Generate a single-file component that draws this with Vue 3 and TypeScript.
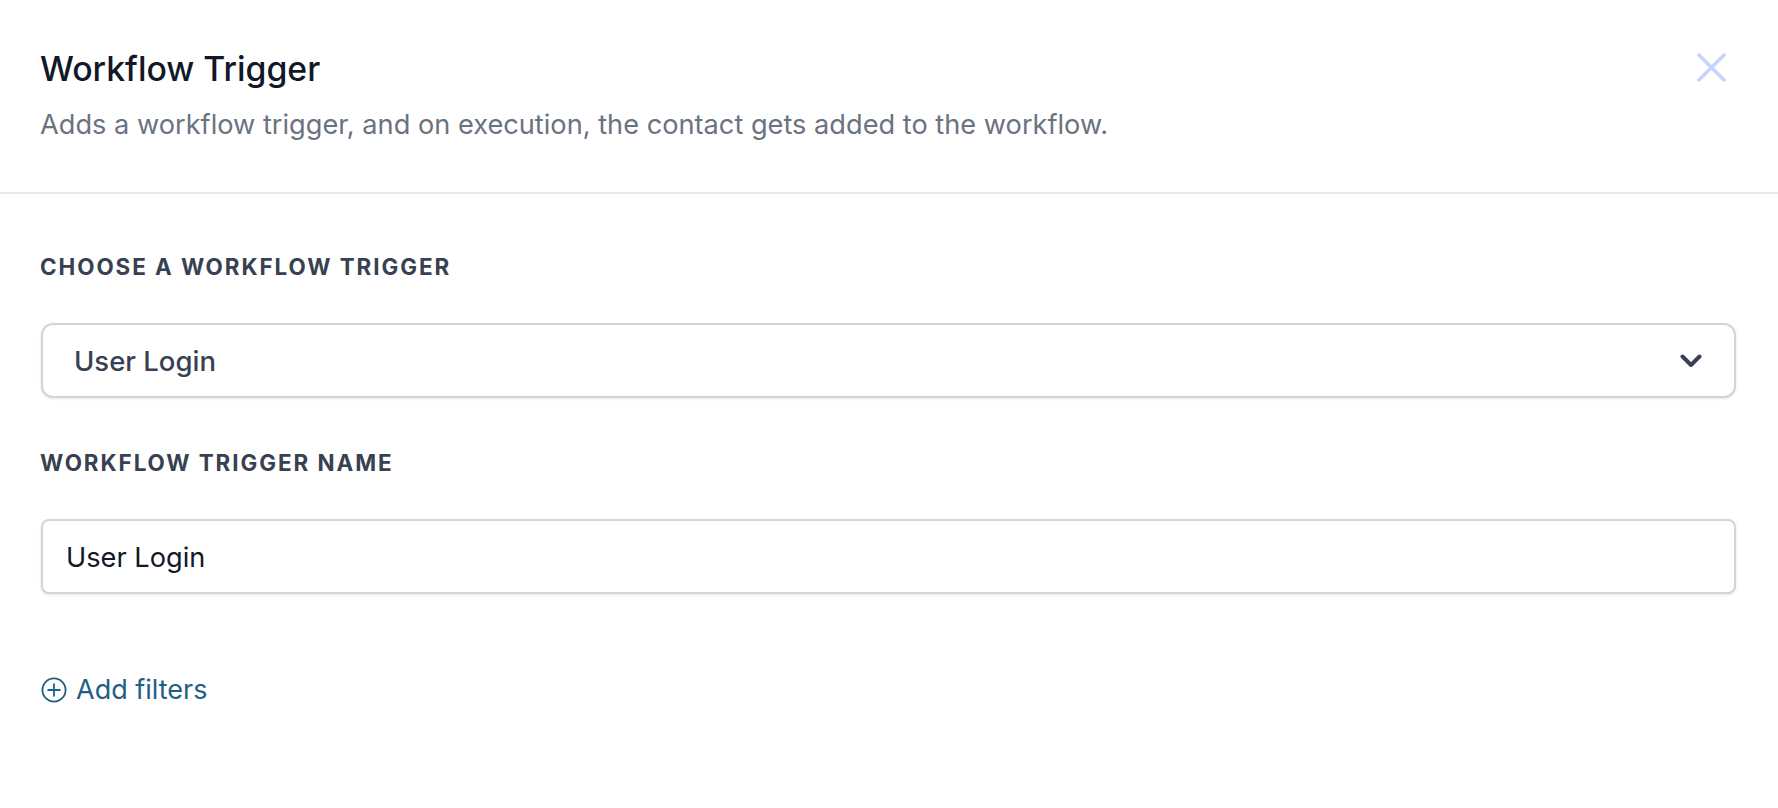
<script setup lang="ts">
const title = 'Workflow Trigger'
const description = 'Adds a workflow trigger, and on execution, the contact gets added to the workflow.'
const triggerName = 'User Login'
</script>

<template>
  <div class="panel">
    <header class="head">
      <div class="head-text">
        <h1 class="title">{{ title }}</h1>
        <p class="desc">{{ description }}</p>
      </div>
      <svg class="close" viewBox="0 0 30 30" fill="none" aria-hidden="true">
        <path d="M2 2L28 28M28 2L2 28" stroke="#c7d2fe" stroke-width="3.6" stroke-linecap="round" />
      </svg>
    </header>
    <main class="body">
      <div class="label">CHOOSE A WORKFLOW TRIGGER</div>
      <div class="select">
        <span>{{ triggerName }}</span>
        <svg class="chev" viewBox="0 0 22 14" fill="none" aria-hidden="true">
          <path d="M2.5 2.5L11 11L19.5 2.5" stroke="#374151" stroke-width="4" stroke-linecap="round" stroke-linejoin="round" />
        </svg>
      </div>
      <div class="label second">WORKFLOW TRIGGER NAME</div>
      <div class="input">{{ triggerName }}</div>
      <div class="add">
        <svg class="plus" viewBox="0 0 26 26" fill="none" aria-hidden="true">
          <circle cx="13" cy="13" r="11.6" stroke="#1f5f85" stroke-width="1.8" />
          <path d="M13 6.5V19.5M6.5 13H19.5" stroke="#1f5f85" stroke-width="1.8" />
        </svg>
        <span>Add filters</span>
      </div>
    </main>
  </div>
</template>

<style>
html, body { background: #fff; }
</style>

<style scoped>
.panel {
  width: 1778px;
  height: 808px;
  background: #fff;
  font-family: Inter, "Liberation Sans", sans-serif;
  overflow: hidden;
}
.head {
  display: flex;
  justify-content: space-between;
  align-items: flex-start;
  height: 194px;
  box-sizing: border-box;
  padding: 49px 41px 0 40px;
  border-bottom: 2px solid #e5e7eb;
}
.title {
  margin: 0;
  font-size: 33.8px;
  line-height: 40px;
  font-weight: 500;
  color: #111827;
}
.desc {
  margin: 20px 0 0;
  font-size: 27.2px;
  line-height: 32px;
  color: #6b7280;
}
.close {
  width: 29px;
  height: 29px;
  margin: 4px 11px 0 0;
}
.body {
  padding: 59px 42px 0 41px;
}
.label {
  margin-left: -1px;
  font-size: 22.4px;
  line-height: 28px;
  font-weight: 700;
  letter-spacing: 1.95px;
  color: #374151;
}
.label.second { margin-top: 51px; }
.select, .input {
  height: 75px;
  box-sizing: border-box;
  margin-top: 42px;
  display: flex;
  align-items: center;
  border: 2px solid #d1d5db;
  background: #fff;
  box-shadow: 0 1px 3px rgba(0, 0, 0, 0.1);
}
.select {
  justify-content: space-between;
  border-radius: 12px;
  padding: 0 32px 0 31px;
  color: #374151;
  font-size: 27.5px;
  font-weight: 500;
}
.input {
  border-radius: 8px;
  padding: 2px 23px 0;
  color: #111827;
  font-size: 27.2px;
}
.chev { width: 22px; height: 14px; }
.add {
  display: flex;
  align-items: center;
  gap: 9px;
  margin-top: 79px;
  font-size: 27px;
  color: #1f5f85;
}
.plus { width: 26px; height: 26px; }
</style>
